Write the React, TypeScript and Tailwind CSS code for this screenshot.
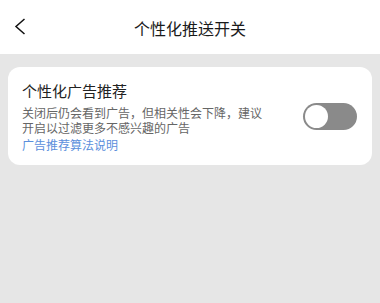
import { useState } from 'react'

const font = { fontFamily: '"Noto Sans CJK SC", "Noto Sans", sans-serif' }

function Toggle({ on, onChange }: { on: boolean; onChange: (v: boolean) => void }) {
  return (
    <button
      onClick={() => onChange(!on)}
      className={`flex h-[27px] w-[54px] shrink-0 items-center rounded-full px-[2px] ${
        on ? 'justify-end bg-[#3b82f6]' : 'justify-start bg-[#8a8a8a]'
      }`}
    >
      <span className="block h-[23px] w-[23px] rounded-full bg-white" />
    </button>
  )
}

export default function App() {
  const [enabled, setEnabled] = useState(false)

  return (
    <div className="flex h-[303px] w-[380px] flex-col bg-[#e6e6e6]" style={font}>
      {/* header */}
      <div className="relative flex h-[54px] shrink-0 items-center justify-center bg-white">
        <button className="absolute left-[12px] top-[16px] flex h-[20px] w-[16px] items-center justify-center">
          <svg width="12" height="17" viewBox="0 0 12 17" fill="none">
            <path d="M10.5 1 L2 8.5 L10.5 16" stroke="#111" strokeWidth="1.5" />
          </svg>
        </button>
        <span className="mt-[2px] text-[16px] leading-[22px] text-[#1a1a1a]">个性化推送开关</span>
      </div>

      {/* content */}
      <div className="px-2 pt-[13px]">
        <div className="flex items-center justify-between rounded-[12px] bg-white pb-[12px] pl-[14px] pr-[15px] pt-[13px]">
          <div className="flex w-[244px] flex-col">
            <span className="text-[15px] leading-[22px] text-[#222]">个性化广告推荐</span>
            <p className="mt-[3px] text-[12px] leading-[15px] text-[#666]">
              关闭后仍会看到广告，但相关性会下降，建议开启以过滤更多不感兴趣的广告
            </p>
            <a className="mt-[2px] text-[12px] leading-[16px] text-[#5b8fdc]">广告推荐算法说明</a>
          </div>
          <Toggle on={enabled} onChange={setEnabled} />
        </div>
      </div>
    </div>
  )
}
